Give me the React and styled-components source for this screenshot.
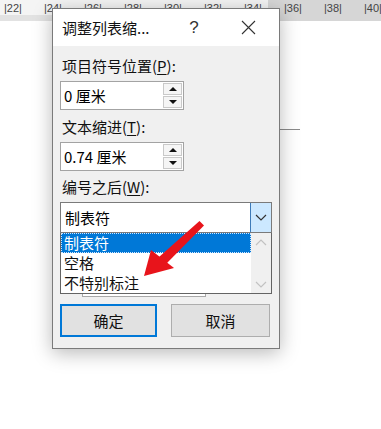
import React from "react";
import styled, { createGlobalStyle } from "styled-components";

const GlobalStyle = createGlobalStyle`
  html, body { margin: 0; padding: 0; background: #fff; }
  body {
    font-family: "Noto Sans", "Noto Sans CJK SC", sans-serif;
    color: #000;
  }
`;

const Page = styled.div`
  position: relative;
  width: 381px;
  height: 429px;
  overflow: hidden;
  background: #fff;
`;

const Ruler = styled.div`
  height: 15px;
  display: flex;
  padding-left: 4px;
  background: linear-gradient(to right, #f4f4f4 268px, #d6d6d6 268px);
  font-family: "Liberation Sans", sans-serif;
  font-size: 11px;
  line-height: 16px;
  color: #444;
`;

const Tick = styled.span`
  flex: 0 0 40px;
  white-space: nowrap;
`;

const RulerShade = styled.div`
  height: 6px;
  background: linear-gradient(to right, #e2e2e2 268px, #d6d6d6 268px);
`;

const DocLine = styled.div`
  margin: 108px 0 0 272px;
  width: 28px;
  height: 1px;
  background: #8a8a8a;
`;

const Dialog = styled.div`
  position: absolute;
  left: 52px;
  top: 8px;
  width: 228px;
  display: flex;
  flex-direction: column;
  border: 1px solid #7a7a7a;
  box-sizing: border-box;
  background: #f0f0f0;
  box-shadow: 0 4px 18px rgba(0, 0, 0, 0.28);
  font-family: "Noto Sans CJK SC", sans-serif;
  font-size: 15px;
`;

const TitleBar = styled.div`
  height: 37px;
  background: #fff;
  display: flex;
  align-items: center;
  padding: 0 8px 0 9px;
`;

const Title = styled.div`
  flex: 1;
  font-size: 15px;
  color: #111;
`;

const TitleButton = styled.div`
  width: ${p => p.$w}px;
  height: 30px;
  display: flex;
  align-items: center;
  justify-content: center;
  color: #333;
  font-family: "Liberation Sans", sans-serif;
  font-size: 17px;
  margin-left: ${p => p.$ml || 0}px;
`;

const Body = styled.div`
  display: flex;
  flex-direction: column;
  padding: 10px 7px 11px 7px;
`;

const Label = styled.div`
  height: 20px;
  line-height: 20px;
  padding-left: 2px;
  margin-top: ${p => p.$mt || 0}px;
  margin-bottom: 5px;
  color: #111;
  u { text-underline-offset: 2px; }
`;

const Spin = styled.div`
  width: 124px;
  height: 29px;
  box-sizing: border-box;
  border: 1px solid #a3a3a3;
  background: #fff;
  display: flex;
`;

const SpinValue = styled.div`
  flex: 1;
  line-height: 27px;
  padding-left: 3px;
`;

const SpinButtons = styled.div`
  width: 19px;
  display: flex;
  flex-direction: column;
  gap: 1px;
  padding: 1px 1px 1px 0;
`;

const SpinBtn = styled.div`
  flex: 1;
  border: 1px solid #c9c9c9;
  background: #f5f5f5;
  display: flex;
  align-items: center;
  justify-content: center;
`;

const Arrow = styled.span`
  width: 0;
  height: 0;
  border-left: 4px solid transparent;
  border-right: 4px solid transparent;
  ${p => (p.$up ? "border-bottom: 4px solid #111;" : "border-top: 4px solid #111;")}
`;

const ComboWrap = styled.div`
  position: relative;
`;

const Combo = styled.div`
  height: 31px;
  box-sizing: border-box;
  border: 1px solid #7a7a7a;
  background: #fff;
  display: flex;
`;

const ComboValue = styled.div`
  flex: 1;
  line-height: 29px;
  padding-left: 4px;
`;

const ComboButton = styled.div`
  width: 20px;
  background: #cce8ff;
  border-left: 1px solid #3d7ab8;
  display: flex;
  align-items: center;
  justify-content: center;
`;

const List = styled.div`
  position: absolute;
  left: 0;
  right: 0;
  top: 100%;
  height: 61px;
  box-sizing: border-box;
  border: 1px solid #646464;
  border-top: none;
  background: #fff;
  display: flex;
  z-index: 2;
`;

const Items = styled.div`
  flex: 1;
  display: flex;
  flex-direction: column;
`;

const Item = styled.div`
  height: 20px;
  line-height: 19px;
  padding-left: 3px;
  box-sizing: border-box;
  background: ${p => (p.$active ? "#0078d7" : "transparent")};
  color: ${p => (p.$active ? "#fff" : "#111")};
  outline: ${p => (p.$active ? "1px dotted #cfe6ff" : "none")};
  outline-offset: -1px;
`;

const ScrollBar = styled.div`
  width: 20px;
  background: #f0f0f0;
  display: flex;
  flex-direction: column;
  justify-content: space-between;
  align-items: center;
  padding: 5px 0 4px;
`;

const Preview = styled.div`
  margin: 8px 0 0 22px;
  width: 124px;
  height: 56px;
  box-sizing: border-box;
  border: 1px solid #a8a8a8;
  background: #fff;
`;

const Buttons = styled.div`
  display: grid;
  grid-template-columns: 97px 99px;
  gap: 14px;
  margin-top: 7px;
`;

const Button = styled.div`
  height: 33px;
  box-sizing: border-box;
  background: #e1e1e1;
  border: ${p => (p.$primary ? "2px solid #0078d7" : "1px solid #adadad")};
  display: flex;
  align-items: center;
  justify-content: center;
  color: #111;
`;

const ArrowOverlay = styled.svg`
  position: absolute;
  left: 0;
  top: 0;
  z-index: 5;
  pointer-events: none;
`;

const Chevron = ({ up, color }) => (
  <svg width="12" height="8" viewBox="0 0 12 8">
    <path
      d={up ? "M1 7 L6 2 L11 7" : "M1 1 L6 6 L11 1"}
      fill="none"
      stroke={color}
      strokeWidth="1.2"
    />
  </svg>
);

const ticks = [22, 24, 26, 28, 30, 32, 34, 36, 38, 40];

export default function App() {
  return (
    <Page>
      <GlobalStyle />
      <Ruler>
        {ticks.map(t => (
          <Tick key={t}>|{t}|</Tick>
        ))}
      </Ruler>
      <RulerShade />
      <DocLine />

      <Dialog>
        <TitleBar>
          <Title>调整列表缩...</Title>
          <TitleButton $w={30}>?</TitleButton>
          <TitleButton $w={46} $ml={16}>
            <svg width="15" height="15" viewBox="0 0 15 15">
              <path d="M1 1 L14 14 M14 1 L1 14" stroke="#333" strokeWidth="1.1" />
            </svg>
          </TitleButton>
        </TitleBar>
        <Body>
          <Label>
            项目符号位置(<u>P</u>):
          </Label>
          <Spin>
            <SpinValue>0 厘米</SpinValue>
            <SpinButtons>
              <SpinBtn><Arrow $up /></SpinBtn>
              <SpinBtn><Arrow /></SpinBtn>
            </SpinButtons>
          </Spin>

          <Label $mt={7}>
            文本缩进(<u>T</u>):
          </Label>
          <Spin>
            <SpinValue>0.74 厘米</SpinValue>
            <SpinButtons>
              <SpinBtn><Arrow $up /></SpinBtn>
              <SpinBtn><Arrow /></SpinBtn>
            </SpinButtons>
          </Spin>

          <Label $mt={6}>
            编号之后(<u>W</u>):
          </Label>
          <ComboWrap>
            <Combo>
              <ComboValue>制表符</ComboValue>
              <ComboButton>
                <Chevron color="#333" />
              </ComboButton>
            </Combo>
            <List>
              <Items>
                <Item $active>制表符</Item>
                <Item>空格</Item>
                <Item>不特别标注</Item>
              </Items>
              <ScrollBar>
                <Chevron up color="#c2c2c2" />
                <Chevron color="#c2c2c2" />
              </ScrollBar>
            </List>
          </ComboWrap>
          <Preview />

          <Buttons>
            <Button $primary>确定</Button>
            <Button>取消</Button>
          </Buttons>
        </Body>
      </Dialog>

      <ArrowOverlay width="381" height="429" viewBox="0 0 381 429">
        <path
          d="M199.5 221 L204 225.5 L166 264 L159 257 Z"
          fill="#e8141b"
        />
        <path d="M144 276 L151 250 L174 268 Z" fill="#e8141b" />
      </ArrowOverlay>
    </Page>
  );
}
